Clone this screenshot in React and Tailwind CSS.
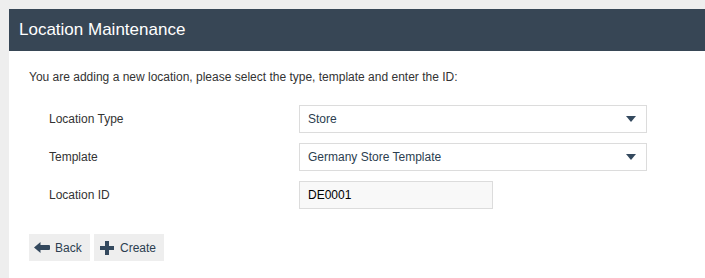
import React from 'react';

function Caret() {
  return (
    <svg width="10" height="6" viewBox="0 0 10 6" className="shrink-0">
      <path d="M0 0h10L5 6z" fill="#34495e" />
    </svg>
  );
}

function SelectBox({ value }) {
  return (
    <div className="flex items-center justify-between w-[348px] h-[28px] border border-[#dcdcdc] bg-white pl-[8px] pr-[10px] text-[12px] text-[#2c3e50]">
      <span>{value}</span>
      <Caret />
    </div>
  );
}

function Row({ label, children }) {
  return (
    <div className="flex items-center h-[28px]">
      <div className="w-[270px] text-[12px] text-[#333] pl-[20px]">{label}</div>
      {children}
    </div>
  );
}

export default function App() {
  return (
    <div className="w-[705px] h-[278px] bg-[#eeeeee] pt-[9px] pl-[9px] overflow-hidden" style={{ fontFamily: '"Liberation Sans", Arial, sans-serif' }}>
      <div className="h-[42px] bg-[#374655] flex items-center px-[10px]">
        <h1 className="text-[17px] text-white">Location Maintenance</h1>
      </div>
      <div className="bg-white h-[240px] pl-[20px] pt-[19px]">
        <p className="text-[12px] text-[#333] leading-[14px]">
          You are adding a new location, please select the type, template and enter the ID:
        </p>
        <div className="mt-[21px] flex flex-col gap-[10px]">
          <Row label="Location Type">
            <SelectBox value="Store" />
          </Row>
          <Row label="Template">
            <SelectBox value="Germany Store Template" />
          </Row>
          <Row label="Location ID">
            <div className="w-[194px] h-[28px] border border-[#dcdcdc] bg-[#f8f8f8] pl-[8px] flex items-center text-[12px] text-black">
              DE0001
            </div>
          </Row>
        </div>
        <div className="mt-[25px] flex gap-[4px]">
          <button className="h-[27px] w-[61px] bg-[#eeeeee] flex items-center gap-[5px] pl-[5px] text-[12px] text-[#2c3e50]">
            <svg width="16" height="11" viewBox="0 0 16 11">
              <path d="M0 5.5L6.5 0v3h8.5a1 1 0 0 1 1 1v3a1 1 0 0 1-1 1H6.5v3z" fill="#34495e" />
            </svg>
            Back
          </button>
          <button className="h-[27px] w-[70px] bg-[#eeeeee] flex items-center gap-[6px] pl-[6px] text-[12px] text-[#2c3e50]">
            <svg width="14" height="14" viewBox="0 0 14 14">
              <path d="M5 0h4v5h5v4H9v5H5V9H0V5h5z" fill="#34495e" />
            </svg>
            Create
          </button>
        </div>
      </div>
    </div>
  );
}
